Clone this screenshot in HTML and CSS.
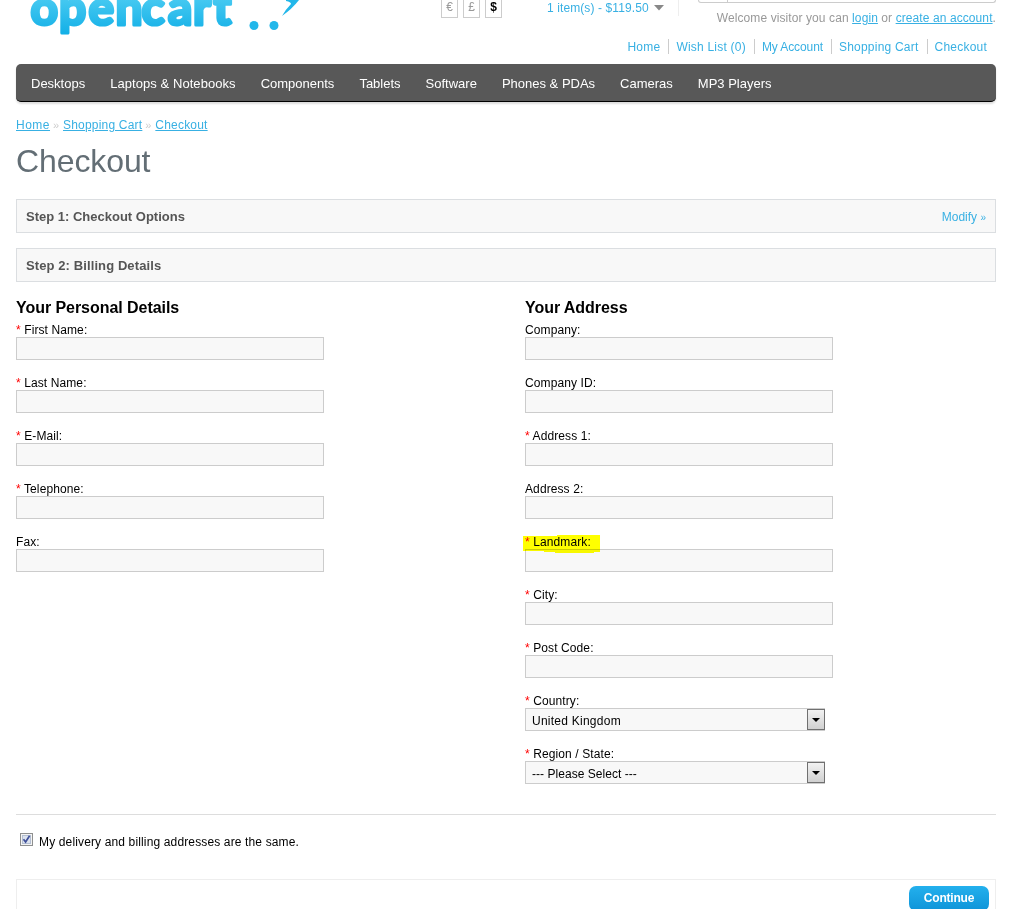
FILE: index.html
```html
<!DOCTYPE html>
<html lang="en">
<head>
<meta charset="utf-8">
<title>Checkout</title>
<link rel="stylesheet" href="styles.css">
</head>
<body>
<div class="container">
  <header class="header">
    <svg class="logo" width="300" height="40" viewBox="0 0 300 40">
      <defs><linearGradient id="blue" gradientUnits="userSpaceOnUse" x1="0" y1="-4" x2="0" y2="36"><stop offset="0" stop-color="#4acbf2"/><stop offset="1" stop-color="#10aee6"/></linearGradient></defs>
      <text class="wordmark" y="25.2" x="14.5 43 72.5 99.5 125.5 152 177 197.5" fill="url(#blue)" stroke="url(#blue)">opencart</text>
      <circle cx="238" cy="25.5" r="4.5" fill="#22b7ea"/>
      <circle cx="258" cy="25.5" r="4.5" fill="#22b7ea"/>
      <path d="M270 0H283Q276 9 266 16Q270 9 275 4Q275 2 270 1Z" fill="#22b7ea"/>
    </svg>
    <div class="currency"><span>€</span><span>£</span><span class="active">$</span></div>
    <div class="cart"><a>1 item(s) - $119.50</a><svg width="10" height="6"><path d="M0 0H10L5 5.5Z" fill="#888"/></svg></div>
    <div class="search"><i></i></div>
    <div class="welcome">Welcome visitor you can <a>login</a> or <a>create an account</a>.</div>
    <nav class="links"><a>Home</a><a>Wish List (0)</a><a class="tight">My Account</a><a>Shopping Cart</a><a>Checkout</a></nav>
  </header>
  <nav class="menu"><a>Desktops</a><a>Laptops &amp; Notebooks</a><a>Components</a><a>Tablets</a><a>Software</a><a>Phones &amp; PDAs</a><a>Cameras</a><a>MP3 Players</a></nav>
  <div class="breadcrumb"><a>Home</a><span>»</span><a>Shopping Cart</a><span>»</span><a>Checkout</a></div>
  <h1>Checkout</h1>
  <div class="step"><b>Step 1: Checkout Options</b><a>Modify <small>»</small></a></div>
  <div class="step"><b class="wide">Step 2: Billing Details</b></div>
  <div class="columns">
    <section>
      <h2>Your Personal Details</h2>
      <div class="field"><label><i>*</i> First Name:</label><input type="text"></div>
      <div class="field"><label><i>*</i> Last Name:</label><input type="text"></div>
      <div class="field"><label><i>*</i> E-Mail:</label><input type="text"></div>
      <div class="field"><label><i>*</i> Telephone:</label><input type="text"></div>
      <div class="field"><label>Fax:</label><input type="text"></div>
    </section>
    <section>
      <h2>Your Address</h2>
      <div class="field"><label>Company:</label><input type="text"></div>
      <div class="field"><label>Company ID:</label><input type="text"></div>
      <div class="field"><label><i>*</i> Address 1:</label><input type="text"></div>
      <div class="field"><label>Address 2:</label><input type="text"></div>
      <div class="field marked"><label><i>*</i> Landmark:</label><input type="text">
        <svg class="marker" width="78" height="20"><path d="M0 1H34V0H77V17H71V18H32V17H21V16H0Z" fill="#ff0"/></svg></div>
      <div class="field"><label><i>*</i> City:</label><input type="text"></div>
      <div class="field"><label><i>*</i> Post Code:</label><input type="text"></div>
      <div class="field"><label><i>*</i> Country:</label><div class="select"><span>United Kingdom</span><div class="drop"><svg width="8" height="4"><path d="M0 0H8L4 4Z"/></svg></div></div></div>
      <div class="field"><label><i>*</i> Region / State:</label><div class="select"><span class="please">--- Please Select ---</span><div class="drop"><svg width="8" height="4"><path d="M0 0H8L4 4Z"/></svg></div></div></div>
    </section>
  </div>
  <div class="same"><svg width="13" height="13"><rect x=".5" y=".5" width="12" height="12" fill="#f4f4f4" stroke="#8e8f8f"/><rect x="2.5" y="2.5" width="8" height="8" fill="#dbe2ee" stroke="#b4bfd2"/><path d="M3.5 6.2L5.6 9L9.6 2.8" fill="none" stroke="#41519a" stroke-width="1.7"/></svg><span>My delivery and billing addresses are the same.</span></div>
  <div class="buttons"><a>Continue</a></div>
</div>
</body>
</html>
```

FILE: styles.css
```css
* { box-sizing: border-box; }
html { height: 909px; overflow: hidden; }
body { margin: 0; height: 909px; overflow: hidden; background: #fff; font: 12px/15px "Liberation Sans", Arial, sans-serif; color: #000; }
.container { width: 980px; margin-left: 16px; }
a { color: #38b0e3; }
i { font-style: normal; }
.header { height: 64px; display: grid; grid-template-columns: 425px 106px 151px 298px; grid-template-rows: 10px 28px 26px; }
.logo { grid-column: 1; grid-row: 1 / 4; }
.wordmark { font: 700 48px Lato, sans-serif; stroke-width: 3.2px; stroke-linejoin: round; }
.currency { grid-column: 2; grid-row: 1 / 3; display: flex; gap: 5px; }
.currency span { width: 17px; height: 18px; border: 1px solid #ccc; border-top: 0; color: #999; text-align: center; line-height: 14px; }
.currency .active { color: #000; font-weight: bold; }
.cart { grid-column: 3; grid-row: 1 / 3; display: flex; gap: 5px; height: 16px; line-height: 16px; letter-spacing: .1px; border-right: 1px solid #eee; width: 132px; }
.cart svg { margin-top: 5px; }
.search { grid-column: 4; grid-row: 1; width: 298px; height: 3px; border: 1px solid #ccc; border-top: 0; border-radius: 0 0 3px 3px; }
.search i { display: block; width: 29px; height: 2px; border-right: 1px solid #ccc; }
.welcome { grid-column: 3 / 5; grid-row: 2; text-align: right; color: #999; white-space: nowrap; letter-spacing: .09px; padding-top: 1px; }
.welcome a, .breadcrumb a { text-decoration: underline; }
.links { grid-column: 3 / 5; grid-row: 3; display: flex; justify-content: flex-end; padding: 1px 9px 0 0; white-space: nowrap; letter-spacing: .22px; }
.links a { height: 15px; line-height: 17px; }
.links .tight { letter-spacing: -.1px; }
.links a + a { border-left: 1px solid #ccc; margin-left: 8px; padding-left: 7px; }
.menu { height: 38px; display: flex; gap: 25px; padding-left: 15px; background: #585858; border-bottom: 1px solid #000; border-radius: 5px; box-shadow: 0 2px 2px #ddd; font-size: 13px; line-height: 39px; white-space: nowrap; }
.menu a { color: #fff; }
.menu a:nth-child(2) { letter-spacing: .06px; }
.breadcrumb { display: flex; gap: 3px; margin-top: 15px; height: 16px; line-height: 16px; letter-spacing: .2px; }
.breadcrumb a:first-child { letter-spacing: .5px; }
.breadcrumb span { color: #ccc; width: 7px; font-size: 11px; }
h1 { margin: 8px 0 0; height: 58px; font-size: 32px; line-height: 40px; font-weight: normal; color: #636e75; letter-spacing: -.1px; }
.step { height: 34px; margin-bottom: 15px; padding: 0 9px; display: flex; justify-content: space-between; background: #f8f8f8; border: 1px solid #dbdee1; font-size: 13px; line-height: 33px; color: #555; }
.step .wide { letter-spacing: .1px; }
.step a { font-size: 12px; line-height: 34px; }
.step small { font-size: 10px; }
.columns { display: grid; grid-template-columns: 509px 1fr; height: 518px; border-bottom: 1px solid #ddd; }
h2 { margin: 0 0 6px; font-size: 16px; line-height: 21px; height: 19px; letter-spacing: -.05px; }
.field { height: 53px; }
.field label { display: block; height: 15px; line-height: 17px; letter-spacing: .1px; }
.field label i { color: #f00; }
.field input { display: block; width: 308px; height: 23px; margin: 0; padding: 0; border: 1px solid #ccc; background: #f8f8f8; border-radius: 0; }
.marked { position: relative; }
.marker { position: absolute; left: -2px; top: 1px; mix-blend-mode: multiply; }
.select { width: 300px; height: 23px; display: flex; justify-content: space-between; padding-left: 6px; border: 1px solid #ccc; border-right: 0; background: #f8f8f8; font-size: 12px; line-height: 24px; letter-spacing: .25px; }
.select .please { letter-spacing: .04px; }
.drop { width: 18px; height: 21px; border: 1px solid #707070; background: linear-gradient(#f2f2f2, #d0d0d0); display: flex; align-items: center; justify-content: center; }
.same { display: flex; gap: 6px; padding: 18px 0 0 4px; height: 64px; }
.same span { line-height: 18px; letter-spacing: .14px; }
.buttons { height: 50px; border: 1px solid #eee; display: flex; justify-content: flex-end; padding: 6px 6px 0; }
.buttons a { width: 80px; height: 25px; border-radius: 7px; background: linear-gradient(#23b0ed, #0f94d8); color: #fff; font-weight: bold; line-height: 25px; text-align: center; letter-spacing: -.2px; }
```
